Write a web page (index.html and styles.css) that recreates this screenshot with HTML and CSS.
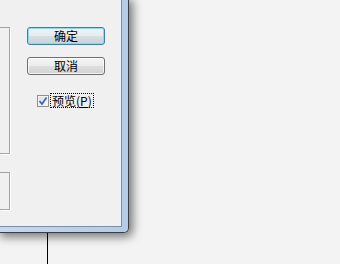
FILE: index.html
```html
<!DOCTYPE html>
<html lang="zh-CN">
<head>
    <meta charset="UTF-8">
    <title>预览</title>
    <link rel="stylesheet" href="styles.css">
</head>
<body>
    <div class="window">
        <div class="client">
            <div class="groups">
                <div class="group group-big"></div>
                <div class="group group-small"></div>
            </div>
            <div class="actions">
                <button class="btn btn-default">确定</button>
                <button class="btn">取消</button>
                <label class="check">
                    <span class="box">
                        <svg width="10" height="10" viewBox="0 0 10 10">
                            <path d="M1.5 5 L4 8 L8.5 1.5" fill="none" stroke="#3d63b8" stroke-width="1.7"/>
                        </svg>
                    </span>
                    <span class="label">预览(<u>P</u>)</span>
                </label>
            </div>
        </div>
    </div>
    <div class="behind"></div>
</body>
</html>
```
FILE: styles.css
```css
*{
    margin: 0;
    padding: 0;
    box-sizing: border-box;
}
body{
    width: 340px;
    height: 264px;
    overflow: hidden;
    background: #f4f3f3;
    font-family: "Noto Sans CJK SC", "Liberation Sans", sans-serif;
    font-size: 12px;
    color: #000;
}
/* dialog frame, cut off at the top and left */
.window{
    width: 129px;
    height: 233px;
    padding: 0 6px 5px 0;
    background: linear-gradient(to right, #c4d8ee, #b4cce6);
    border-right: 1px solid #3a3f46;
    border-bottom: 1px solid #3a3f46;
    border-bottom-right-radius: 5px;
    box-shadow: 2px 2px 10px 2px rgba(0,0,0,0.5);
    position: relative;
    z-index: 1;
}
.client{
    display: flex;
    height: 100%;
    background: #f0f0f0;
    border-right: 1px solid #7f8fa2;
    border-bottom: 1px solid #7f8fa2;
}
.groups{
    width: 11px;
    padding-top: 27px;
}
.group{
    width: 10px;
    border: 1px solid #a5a5a5;
    border-left: none;
    box-shadow: 1px 1px 0 #fff;
}
.group-big{
    height: 127px;
}
.group-small{
    height: 38px;
    margin-top: 18px;
}
.actions{
    display: flex;
    flex-direction: column;
    margin-left: 16px;
    padding-top: 27px;
}
.btn{
    width: 78px;
    height: 18px;
    font: inherit;
    line-height: 14px;
    border: 1px solid #707070;
    border-radius: 3px;
    background: linear-gradient(#f4f4f4 0%, #ececec 50%, #dedede 50%, #d2d2d2 100%);
    box-shadow: inset 0 0 0 1px rgba(255,255,255,0.7);
    margin-bottom: 12px;
}
.btn-default{
    border-color: #3c7fb1;
    box-shadow: inset 0 0 0 1px #8fd6f2;
    background: linear-gradient(#f0f4f6 0%, #e6ecef 50%, #d6dfe3 50%, #c9d3d8 100%);
}
.check{
    display: flex;
    align-items: center;
    margin: 7px 0 0 10px;
}
.box{
    display: flex;
    align-items: center;
    justify-content: center;
    width: 12px;
    height: 12px;
    border: 1px solid #8e8f8f;
    background: linear-gradient(135deg, #dcdcdc, #fbfbfb);
    box-shadow: inset 0 0 0 1px #f4f4f4;
}
.label{
    margin-left: 2px;
    padding: 0 1px;
    font-size: 12px;
    line-height: 13px;
    outline: 1px dotted #000;
}
.label u{
    text-decoration: underline;
}
.behind{
    width: 1px;
    height: 40px;
    margin-left: 47px;
    background: #000;
}
```
